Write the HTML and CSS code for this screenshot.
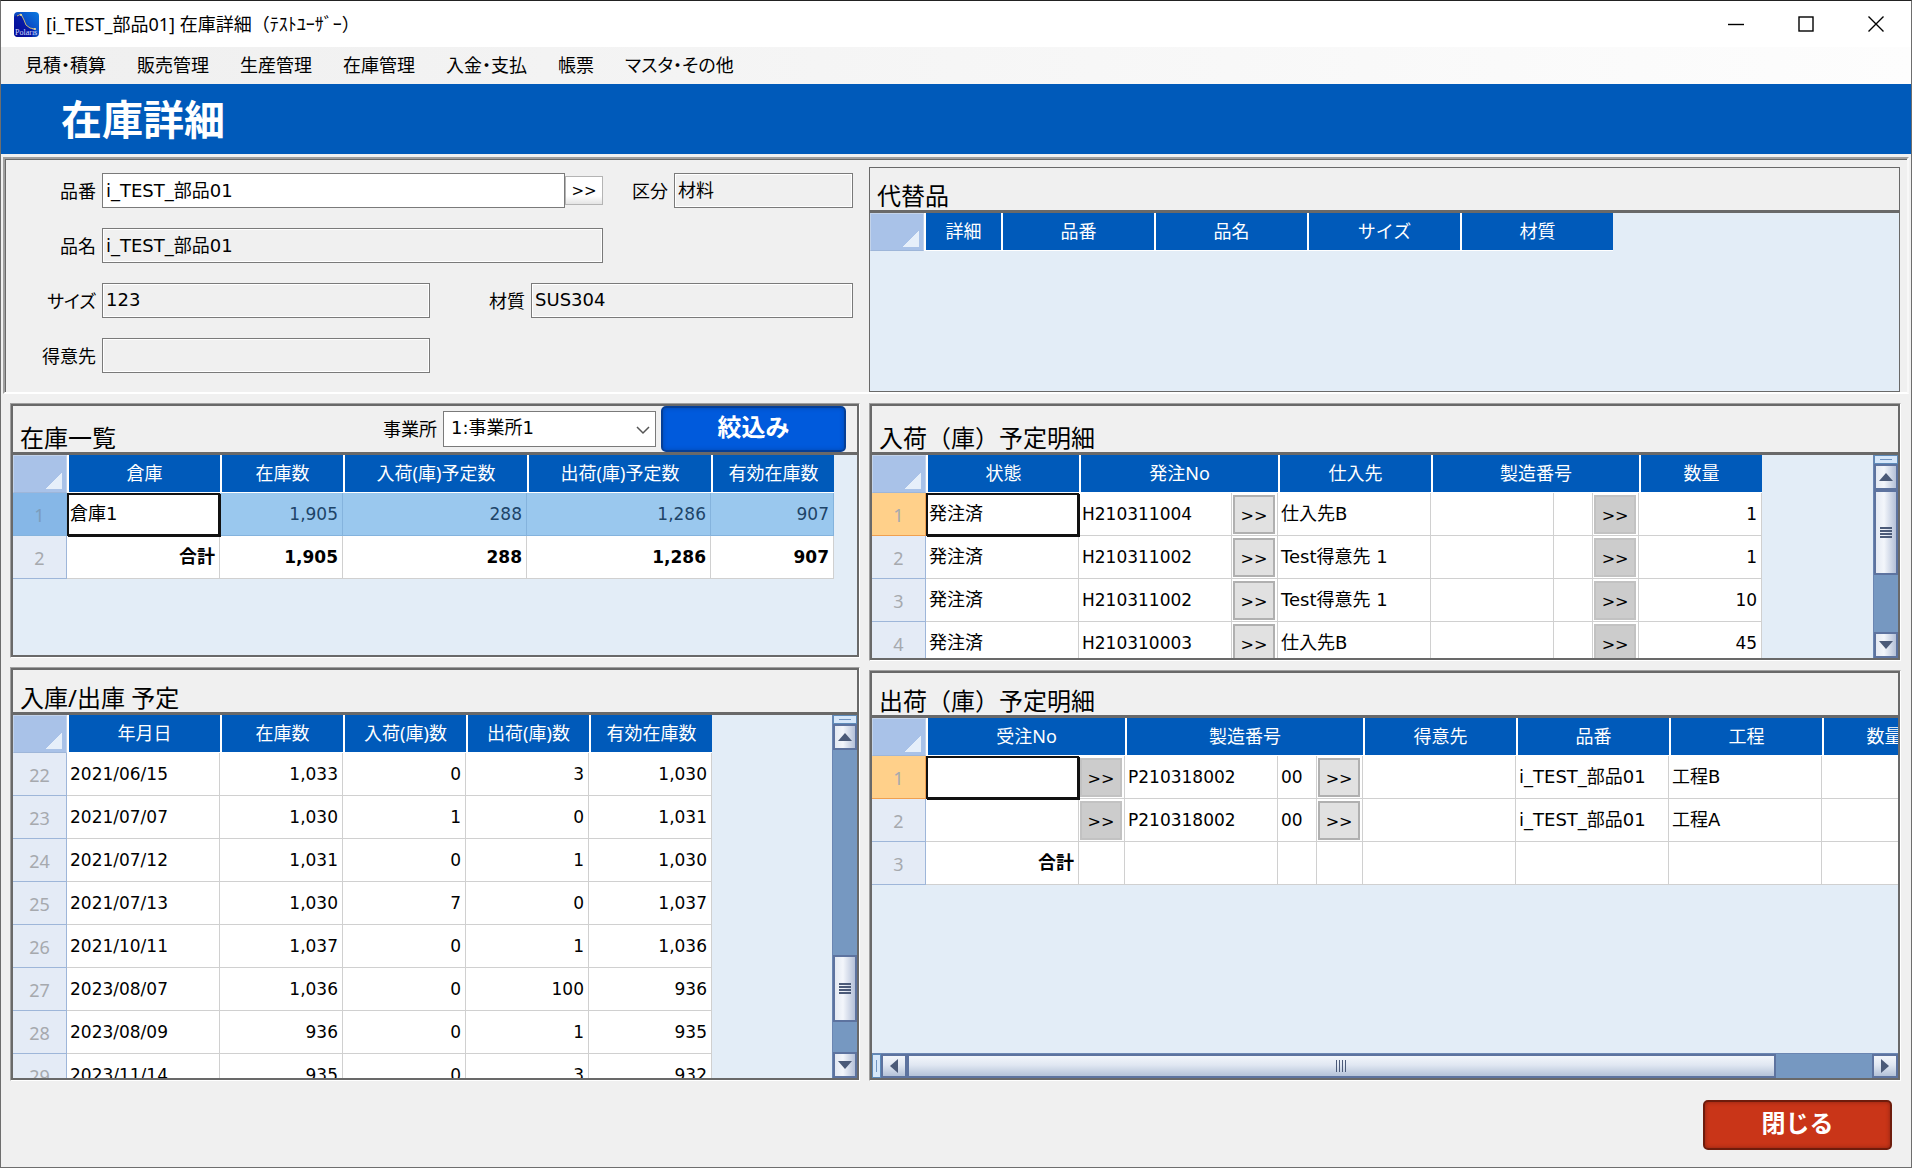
FILE: index.html
```html
<!DOCTYPE html>
<html lang="ja">
<head>
    <meta charset="UTF-8">
    <meta name="viewport" content="width=device-width, initial-scale=1.0">
    <title>[i_TEST_部品01] 在庫詳細</title>
    <link rel="stylesheet" href="styles.css">
</head>
<body>
<div class="window">
    <header class="titlebar">
        <svg class="app-icon" viewBox="0 0 25 25" width="25" height="25" aria-hidden="true">
            <defs>
                <linearGradient id="sky" x1="1" y1="0" x2="0" y2="1">
                    <stop offset="0" stop-color="#0a7be0"/>
                    <stop offset="0.45" stop-color="#0a4fc8"/>
                    <stop offset="1" stop-color="#08087c"/>
                </linearGradient>
            </defs>
            <rect width="25" height="25" rx="4" fill="url(#sky)"/>
            <path d="M0 5 L5 2 L9 6 L12 13 L16 16 L21 17 L18 25 L4 25 Q0 25 0 21 Z" fill="#06089c" opacity="0.7"/>
            <path d="M3 4 L7 2 L10 8 L12 13 L16 16 L21 17" fill="none" stroke="#c9b878" stroke-width="1"/>
            <circle cx="7" cy="3" r="1" fill="#f2e6a0"/>
            <circle cx="21" cy="17" r="1" fill="#f2e6a0"/>
            <text x="1" y="23" class="app-icon-text">Polaris</text>
        </svg>
        <span class="titlebar-text">[i_TEST_部品01] 在庫詳細（ﾃｽﾄﾕｰｻﾞｰ）</span>
        <div class="window-buttons">
            <button type="button" aria-label="最小化"><svg width="16" height="16" viewBox="0 0 16 16"><path d="M0 8.5H16" stroke="#000" stroke-width="1.4"/></svg></button>
            <button type="button" aria-label="最大化"><svg width="16" height="16" viewBox="0 0 16 16"><rect x="1" y="1" width="14" height="14" fill="none" stroke="#000" stroke-width="1.4"/></svg></button>
            <button type="button" aria-label="閉じる"><svg width="16" height="16" viewBox="0 0 16 16"><path d="M0.5 0.5L15.5 15.5M15.5 0.5L0.5 15.5" stroke="#000" stroke-width="1.4"/></svg></button>
        </div>
    </header>

    <nav class="menubar">
        <a href="#">見積・積算</a>
        <a href="#">販売管理</a>
        <a href="#">生産管理</a>
        <a href="#">在庫管理</a>
        <a href="#">入金・支払</a>
        <a href="#">帳票</a>
        <a href="#">マスタ・その他</a>
    </nav>

    <h1 class="page-title">在庫詳細</h1>

    <!-- 品目情報 -->
    <section class="band columns">
        <form class="item-form">
            <label for="hinban">品番</label>
            <input class="field to-btn" id="hinban" type="text" value="i_TEST_部品01">
            <button class="lookup" type="button">&gt;&gt;</button>
            <label for="kubun">区分</label>
            <input class="field" id="kubun" type="text" value="材料" readonly>

            <label class="first" for="hinmei">品名</label>
            <input class="field to-mid" id="hinmei" type="text" value="i_TEST_部品01" readonly>

            <label class="first" for="size">サイズ</label>
            <input class="field" id="size" type="text" value="123" readonly>
            <label for="zaishitsu">材質</label>
            <input class="field to-end" id="zaishitsu" type="text" value="SUS304" readonly>

            <label class="first" for="tokuisaki">得意先</label>
            <input class="field" id="tokuisaki" type="text" value="" readonly>
        </form>

        <div class="frame thin">
            <div class="caption"><h2>代替品</h2></div>
            <div class="pane">
                <div class="view">
                    <table class="grid">
                        <colgroup><col class="c-row"><col class="c-detail"><col class="c-text"><col class="c-text"><col class="c-text"><col class="c-text"></colgroup>
                        <thead>
                            <tr><td class="corner"></td><th>詳細</th><th>品番</th><th>品名</th><th>サイズ</th><th>材質</th></tr>
                        </thead>
                    </table>
                </div>
            </div>
        </div>
    </section>

    <main class="columns lists">
        <div class="stack">
            <section class="panel stock">
                <div class="frame">
                    <div class="caption tall">
                        <h2>在庫一覧</h2>
                        <form class="filter">
                            <label for="office">事業所</label>
                            <span class="select-box">
                                <select id="office"><option>1:事業所1</option></select>
                                <svg width="14" height="9" viewBox="0 0 14 9" aria-hidden="true"><path d="M1 1L7 7L13 1" fill="none" stroke="#555" stroke-width="1.5"/></svg>
                            </span>
                            <button class="btn-filter" type="button">絞込み</button>
                        </form>
                    </div>
                    <div class="pane">
                        <div class="view">
                            <table class="grid">
                                <colgroup><col class="c-row"><col class="c-text"><col class="c-num"><col class="c-wide"><col class="c-wide"><col class="c-num"></colgroup>
                                <thead>
                                    <tr><td class="corner"></td><th>倉庫</th><th>在庫数</th><th>入荷(庫)予定数</th><th>出荷(庫)予定数</th><th>有効在庫数</th></tr>
                                </thead>
                                <tbody>
                                    <tr class="selected"><td class="no">1</td><td class="active">倉庫1</td><td class="num">1,905</td><td class="num">288</td><td class="num">1,286</td><td class="num">907</td></tr>
                                    <tr class="total"><td class="no">2</td><td class="sum">合計</td><td class="num">1,905</td><td class="num">288</td><td class="num">1,286</td><td class="num">907</td></tr>
                                </tbody>
                            </table>
                        </div>
                    </div>
                </div>
            </section>

            <section class="panel fill">
                <div class="frame">
                    <div class="caption"><h2>入庫/出庫 予定</h2></div>
                    <div class="pane">
                        <div class="view">
                            <table class="grid">
                                <colgroup><col class="c-row"><col class="c-text"><col class="c-num"><col class="c-num"><col class="c-num"><col class="c-num"></colgroup>
                                <thead>
                                    <tr><td class="corner"></td><th>年月日</th><th>在庫数</th><th>入荷(庫)数</th><th>出荷(庫)数</th><th>有効在庫数</th></tr>
                                </thead>
                                <tbody>
                                    <tr><td class="no">22</td><td class="code">2021/06/15</td><td class="num">1,033</td><td class="num">0</td><td class="num">3</td><td class="num">1,030</td></tr>
                                    <tr><td class="no">23</td><td class="code">2021/07/07</td><td class="num">1,030</td><td class="num">1</td><td class="num">0</td><td class="num">1,031</td></tr>
                                    <tr><td class="no">24</td><td class="code">2021/07/12</td><td class="num">1,031</td><td class="num">0</td><td class="num">1</td><td class="num">1,030</td></tr>
                                    <tr><td class="no">25</td><td class="code">2021/07/13</td><td class="num">1,030</td><td class="num">7</td><td class="num">0</td><td class="num">1,037</td></tr>
                                    <tr><td class="no">26</td><td class="code">2021/10/11</td><td class="num">1,037</td><td class="num">0</td><td class="num">1</td><td class="num">1,036</td></tr>
                                    <tr><td class="no">27</td><td class="code">2023/08/07</td><td class="num">1,036</td><td class="num">0</td><td class="num">100</td><td class="num">936</td></tr>
                                    <tr><td class="no">28</td><td class="code">2023/08/09</td><td class="num">936</td><td class="num">0</td><td class="num">1</td><td class="num">935</td></tr>
                                    <tr><td class="no">29</td><td class="code">2023/11/14</td><td class="num">935</td><td class="num">0</td><td class="num">3</td><td class="num">932</td></tr>
                                </tbody>
                            </table>
                        </div>
                        <div class="vscroll">
                            <span class="splitter"></span>
                            <button type="button" aria-label="上へ"><svg width="14" height="8" viewBox="0 0 14 8"><path d="M7 0L14 8H0Z" fill="#4b5a78"/></svg></button>
                            <div class="track low"><span class="thumb"></span></div>
                            <button type="button" aria-label="下へ"><svg width="14" height="8" viewBox="0 0 14 8"><path d="M0 0H14L7 8Z" fill="#4b5a78"/></svg></button>
                        </div>
                    </div>
                </div>
            </section>
        </div>

        <div class="stack">
            <section class="panel arrivals">
                <div class="frame">
                    <div class="caption tall"><h2>入荷（庫）予定明細</h2></div>
                    <div class="pane">
                        <div class="view">
                            <table class="grid">
                                <colgroup><col class="c-row"><col class="c-text"><col class="c-text"><col class="c-btn"><col class="c-text"><col class="c-num"><col class="c-sub"><col class="c-btn"><col class="c-num"></colgroup>
                                <thead>
                                    <tr><td class="corner"></td><th>状態</th><th colspan="2">発注No</th><th>仕入先</th><th colspan="3">製造番号</th><th>数量</th></tr>
                                </thead>
                                <tbody>
                                    <tr class="current"><td class="no">1</td><td class="active">発注済</td><td class="code">H210311004</td><td class="cmd"><button type="button">&gt;&gt;</button></td><td>仕入先B</td><td></td><td></td><td class="cmd"><button class="off" type="button">&gt;&gt;</button></td><td class="num">1</td></tr>
                                    <tr><td class="no">2</td><td>発注済</td><td class="code">H210311002</td><td class="cmd"><button type="button">&gt;&gt;</button></td><td>Test得意先 1</td><td></td><td></td><td class="cmd"><button class="off" type="button">&gt;&gt;</button></td><td class="num">1</td></tr>
                                    <tr><td class="no">3</td><td>発注済</td><td class="code">H210311002</td><td class="cmd"><button type="button">&gt;&gt;</button></td><td>Test得意先 1</td><td></td><td></td><td class="cmd"><button class="off" type="button">&gt;&gt;</button></td><td class="num">10</td></tr>
                                    <tr><td class="no">4</td><td>発注済</td><td class="code">H210310003</td><td class="cmd"><button type="button">&gt;&gt;</button></td><td>仕入先B</td><td></td><td></td><td class="cmd"><button class="off" type="button">&gt;&gt;</button></td><td class="num">45</td></tr>
                                </tbody>
                            </table>
                        </div>
                        <div class="vscroll">
                            <span class="splitter"></span>
                            <button type="button" aria-label="上へ"><svg width="14" height="8" viewBox="0 0 14 8"><path d="M7 0L14 8H0Z" fill="#4b5a78"/></svg></button>
                            <div class="track high"><span class="thumb"></span></div>
                            <button type="button" aria-label="下へ"><svg width="14" height="8" viewBox="0 0 14 8"><path d="M0 0H14L7 8Z" fill="#4b5a78"/></svg></button>
                        </div>
                    </div>
                </div>
            </section>

            <section class="panel fill">
                <div class="frame">
                    <div class="caption"><h2>出荷（庫）予定明細</h2></div>
                    <div class="pane">
                        <div class="view">
                            <table class="grid">
                                <colgroup><col class="c-row"><col class="c-text"><col class="c-btn"><col class="c-text"><col class="c-sub"><col class="c-btn"><col class="c-text"><col class="c-text"><col class="c-text"><col class="c-num"></colgroup>
                                <thead>
                                    <tr><td class="corner"></td><th colspan="2">受注No</th><th colspan="3">製造番号</th><th>得意先</th><th>品番</th><th>工程</th><th>数量</th></tr>
                                </thead>
                                <tbody>
                                    <tr class="current"><td class="no">1</td><td class="active"></td><td class="cmd"><button class="off" type="button">&gt;&gt;</button></td><td class="code">P210318002</td><td class="code">00</td><td class="cmd"><button type="button">&gt;&gt;</button></td><td></td><td>i_TEST_部品01</td><td>工程B</td><td></td></tr>
                                    <tr><td class="no">2</td><td></td><td class="cmd"><button class="off" type="button">&gt;&gt;</button></td><td class="code">P210318002</td><td class="code">00</td><td class="cmd"><button type="button">&gt;&gt;</button></td><td></td><td>i_TEST_部品01</td><td>工程A</td><td></td></tr>
                                    <tr class="total"><td class="no">3</td><td class="sum">合計</td><td></td><td></td><td></td><td></td><td></td><td></td><td></td><td></td></tr>
                                </tbody>
                            </table>
                        </div>
                    </div>
                    <div class="hscroll">
                        <span class="splitter"></span>
                        <button type="button" aria-label="左へ"><svg width="8" height="14" viewBox="0 0 8 14"><path d="M8 0V14L0 7Z" fill="#4b5a78"/></svg></button>
                        <div class="track"><span class="thumb"></span></div>
                        <button type="button" aria-label="右へ"><svg width="8" height="14" viewBox="0 0 8 14"><path d="M0 0V14L8 7Z" fill="#4b5a78"/></svg></button>
                    </div>
                </div>
            </section>
        </div>
    </main>

    <footer class="footer">
        <button class="btn-close" type="button">閉じる</button>
    </footer>
</div>
</body>
</html>
```

FILE: styles.css
```css
* {
    box-sizing: border-box;
}
body {
    margin: 0;
    font-family: "Noto Sans", "Noto Sans CJK JP", sans-serif;
    font-size: 18px;
    line-height: 24px;
    color: #000;
}
button, input, select {
    font: inherit;
    color: inherit;
    margin: 0;
    padding: 0;
}
h1, h2 {
    margin: 0;
    font-weight: 400;
}
.window {
    display: flex;
    flex-direction: column;
    height: 100vh;
    min-height: 900px;
    overflow: hidden;
    background: #f0f0f0;
    border: 1px solid #6e6e6e;
    border-top-color: #222;
}

/* title bar and menu */
.titlebar {
    display: flex;
    align-items: center;
    flex: 0 0 46px;
    padding-left: 13px;
    background: #fff;
}
.app-icon-text {
    font-family: "Liberation Serif", serif;
    font-size: 8px;
    fill: #d5dcff;
}
.titlebar-text {
    flex: 1;
    padding-left: 7px;
}
.window-buttons {
    display: flex;
}
.window-buttons button {
    display: flex;
    align-items: center;
    justify-content: center;
    width: 70px;
    height: 44px;
    border: 0;
    background: none;
}
.menubar {
    display: flex;
    align-items: center;
    flex: 0 0 37px;
    padding: 0 0 2px 9px;
    background: linear-gradient(90deg, #efefef, #fdfdfd);
    font-feature-settings: "palt";
}
.menubar a {
    padding: 0 16px 0 15px;
    color: #000;
    text-decoration: none;
}
.page-title {
    flex: 0 0 70px;
    padding-left: 60px;
    background: #005aba;
    color: #fff;
    font-size: 41px;
    line-height: 70px;
    font-weight: 700;
}

/* two columns shared by the item band and the lists */
.columns {
    display: grid;
    grid-template-columns: minmax(0, 850fr) minmax(0, 1032fr);
    column-gap: 9px;
}
.band {
    flex: 0 0 237px;
    margin: 3px 2px 0;
    padding: 8px 7px 0 6px;
    border: 2px solid;
    border-color: #a0a0a0 #f8f8f8 #fff #a0a0a0;
    box-shadow: inset 1px 1px 0 #696969;
}
.item-form {
    display: grid;
    grid-template-columns: 91px 328fr 101px 34px 38px 71px 179fr;
    grid-auto-rows: 35px;
    row-gap: 20px;
    align-items: center;
    align-content: start;
    padding: 6px 7px 0 0;
}
.item-form label {
    padding-right: 6px;
    text-align: right;
    white-space: nowrap;
    font-feature-settings: "palt";
}
.item-form .first {
    grid-column: 1;
}
.field {
    width: 100%;
    height: 35px;
    padding: 0 3px 3px;
    border: 1px solid #7a7a7a;
    border-radius: 0;
    background: #fff;
    box-shadow: inset 0 0 0 1px #fff;
    font-family: "DejaVu Sans", "Noto Sans CJK JP", sans-serif;
}
.field[readonly] {
    background: #f0f0f0;
}
.to-btn {
    grid-column: 2 / 5;
}
.to-mid {
    grid-column: 2 / 6;
}
.to-end {
    grid-column: 4 / 8;
}
.lookup {
    height: 29px;
    border: 1px solid #b4b4b4;
    background: linear-gradient(#fff, #fff 70%, #e4e4e4);
    font-family: "DejaVu Sans", sans-serif;
    font-size: 15px;
}

/* panels */
.lists {
    flex: 1 1 0;
    min-height: 0;
    padding: 9px 10px 0 9px;
}
.stack {
    display: flex;
    flex-direction: column;
    gap: 9px;
    min-height: 0;
}
.panel {
    display: flex;
    border: 1px solid;
    border-color: #a0a0a0 #fff #fff #a0a0a0;
}
.stock {
    flex: 0 0 255px;
}
.arrivals {
    flex: 0 0 258px;
}
.fill {
    flex: 1 1 0;
    min-height: 0;
}
.frame {
    display: flex;
    flex-direction: column;
    flex: 1;
    min-width: 0;
    min-height: 0;
    border: 2px solid #696969;
    overflow: hidden;
}
.frame.thin {
    border-width: 1px;
}
.caption {
    display: flex;
    align-items: flex-end;
    justify-content: space-between;
    flex: 0 0 45px;
    padding-left: 7px;
    border-bottom: 3px solid #696969;
}
.caption.tall {
    flex-basis: 49px;
}
.caption h2 {
    font-size: 24px;
    line-height: 28px;
}
.filter {
    display: flex;
    align-items: center;
    align-self: stretch;
    padding-right: 11px;
}
.filter label {
    padding-right: 6px;
}
.select-box {
    position: relative;
    width: 213px;
    margin-right: 5px;
}
.select-box select {
    display: block;
    width: 100%;
    height: 36px;
    padding: 0 7px 2px;
    border: 1px solid #7a7a7a;
    border-radius: 0;
    background: #fff;
    appearance: none;
    font-family: "DejaVu Sans", "Noto Sans CJK JP", sans-serif;
}
.select-box svg {
    position: absolute;
    right: 6px;
    top: 15px;
}
.btn-filter, .btn-close {
    border: 2px solid #063f96;
    border-radius: 5px;
    background: #005adc;
    box-shadow: inset 0 0 4px #0047b0;
    color: #fff;
    font-size: 24px;
    font-weight: 700;
}
.btn-filter {
    width: 185px;
    height: 46px;
    padding-bottom: 4px;
}

/* data grids */
.pane {
    display: flex;
    flex: 1 1 0;
    min-height: 0;
    background: #e3edf7;
}
.view {
    flex: 1;
    min-width: 0;
    overflow: hidden;
}
.grid {
    width: 1px;
    table-layout: fixed;
    border-collapse: separate;
    border-spacing: 0;
}
.c-row { width: 54px; }
.c-detail { width: 77px; }
.c-text { width: 153px; }
.c-num { width: 123px; }
.c-wide { width: 184px; }
.c-btn { width: 46px; }
.c-sub { width: 39px; }
.grid th, .grid td {
    padding: 0;
    white-space: nowrap;
    overflow: hidden;
}
.grid th {
    height: 38px;
    padding-bottom: 2px;
    border-left: 2px solid #fff;
    border-bottom: 1px solid #fff;
    background: #005aba;
    color: #fff;
    font-weight: 400;
}
.grid .corner {
    border: 1px solid #c3d3ea;
    border-bottom-color: #9eb6d9;
    background: linear-gradient(135deg, transparent 50%, #e6effa 50%) no-repeat right 4px bottom 3px / 16px 16px, #a9c2e8;
}
.grid tbody td {
    height: 43px;
    padding: 0 3px;
    border-right: 1px solid #d0d0d0;
    border-bottom: 1px solid #d0d0d0;
    background: #fff;
    font-family: "DejaVu Sans", "Noto Sans CJK JP", sans-serif;
}
.grid tbody .num, .grid tbody .code {
    font-size: 17px;
}
.grid tbody .num, .grid tbody .sum {
    padding-right: 4px;
    text-align: right;
}
.grid tbody .no {
    padding-top: 2px;
    border-color: #9eb6d9;
    background: #e4ebf6;
    color: #a6a9ae;
    font-family: "Noto Sans", sans-serif;
    text-align: center;
}
.grid .current .no {
    border-color: #f0a050;
    background: #ffd08a;
}
.grid .selected td {
    border-color: #84b3dd;
    background: #9ac8ee;
    color: #1d4468;
}
.grid .selected .no {
    background: #86b7e7;
    color: #7b9cbc;
}
.grid .total td {
    font-weight: 700;
}
.grid .total .no {
    font-weight: 400;
}
.grid tbody .active {
    position: relative;
    padding: 0 1px 1px;
    border: 2px solid #111;
    background: #fff;
    color: #000;
    box-shadow: 1px 1px 0 #111;
}
.grid tbody .cmd {
    padding: 0 2px 0 1px;
}
.cmd button {
    display: block;
    width: 100%;
    height: 39px;
    border: 2px solid #b0b0b0;
    background: #e1e1e1;
    font-family: "DejaVu Sans", sans-serif;
    font-size: 16px;
    padding-top: 4px;
}
.cmd .off {
    border-color: #c2c2c2;
    background: #ccc;
}

/* scroll bars */
.vscroll, .hscroll {
    display: flex;
    background: #7698c1;
}
.vscroll {
    flex: 0 0 25px;
    flex-direction: column;
    border-left: 1px solid #6b86b2;
}
.hscroll {
    flex: 0 0 25px;
    border-top: 1px solid #6b86b2;
}
.vscroll button, .hscroll button {
    display: flex;
    align-items: center;
    justify-content: center;
    flex: 0 0 26px;
    border: 2px solid #5d739f;
}
.vscroll button, .vscroll .thumb {
    background: linear-gradient(90deg, #e4e9f2, #f3f6fb 40%, #b4c0d8);
}
.hscroll button, .hscroll .thumb {
    background: linear-gradient(#f3f6fb, #e0e7f2 45%, #b4c2d8);
}
.splitter {
    border: 1px solid #5d8ab9;
    background: #d6e7fa;
}
.vscroll .splitter {
    flex: 0 0 9px;
    background: linear-gradient(#6f93c0, #6f93c0) no-repeat center / 12px 1px, #d6e7fa;
}
.hscroll .splitter {
    flex: 0 0 9px;
    background: linear-gradient(#6f93c0, #6f93c0) no-repeat center / 1px 12px, #d6e7fa;
}
.track {
    display: flex;
    flex: 1;
    min-height: 0;
}
.vscroll .track {
    flex-direction: column;
}
.thumb {
    display: flex;
    align-items: center;
    justify-content: center;
    border: 2px solid #5d739f;
}
.thumb::after {
    content: "";
    width: 12px;
    height: 11px;
    background: repeating-linear-gradient(#4b5a78 0 2px, transparent 2px 3px);
}
.hscroll .thumb::after {
    width: 11px;
    height: 12px;
    background: repeating-linear-gradient(90deg, #4b5a78 0 1px, transparent 1px 3px);
}
.high .thumb {
    height: 60%;
}
.low .thumb {
    height: 22%;
}
.low::before {
    content: "";
    height: 68%;
}
.hscroll .thumb {
    width: 90%;
}

/* footer */
.footer {
    display: flex;
    justify-content: flex-end;
    flex: 0 0 86px;
    padding: 19px 19px 0 0;
}
.btn-close {
    width: 189px;
    height: 50px;
    padding-bottom: 4px;
    border-color: #6e1c0c;
    background: #c93518;
    box-shadow: inset 0 0 4px #8c2410;
}
```
